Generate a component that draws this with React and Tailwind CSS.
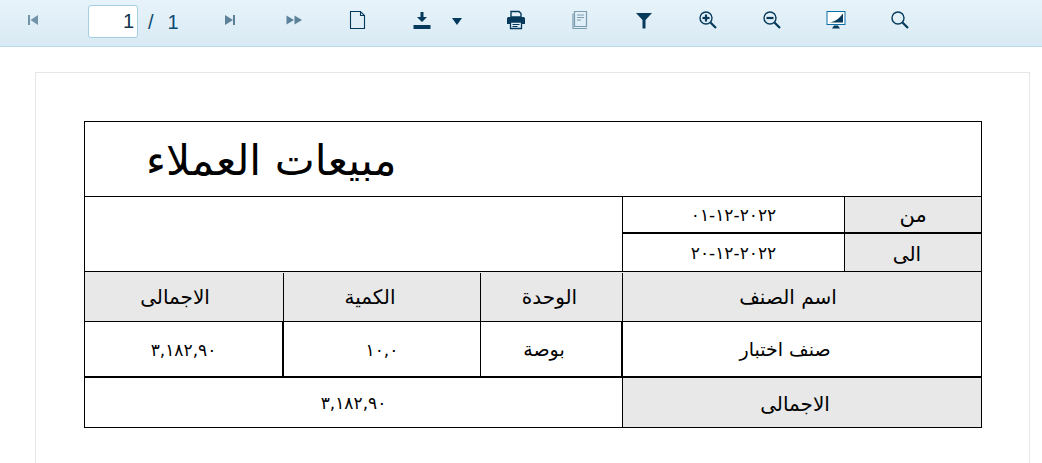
import React from "react";

const Ico = ({ children, className = "" }) => (
  <svg width="20" height="20" viewBox="0 0 20 20" className={className}>
    {children}
  </svg>
);

const NAVY = "#053a5c";

const FirstIcon = () => (
  <Ico className="opacity-50">
    <path d="M5 5h2v10H5zM15 5v10L7.500 10z" fill={NAVY} />
  </Ico>
);
const NextEndIcon = () => (
  <Ico className="opacity-60">
    <path d="M5 5l8 5-8 5zM13 5h2v10h-2z" fill={NAVY} />
  </Ico>
);
const LastIcon = () => (
  <Ico className="opacity-60">
    <path d="M2.500 5.500L10 10l-7.500 4.500zM10.500 5.500L18 10l-7.500 4.500z" fill={NAVY} />
  </Ico>
);
const DocIcon = () => (
  <Ico>
    <path d="M2.500 1.500h10l4 4v13h-14z M12.500 1.500v4h4" fill="none" stroke={NAVY} strokeWidth="1.100" />
  </Ico>
);
const DownloadIcon = () => (
  <Ico>
    <path d="M8.500 2h3v5h3.500L10 12 5 7h3.500z" fill={NAVY} />
    <rect x="1.500" y="15" width="17" height="4" fill={NAVY} />
  </Ico>
);
const PrintIcon = () => (
  <Ico>
    <path d="M5 1.500h8l2 2V7H5z" fill="none" stroke={NAVY} strokeWidth="1.400" />
    <path d="M1 8.500a1.500 1.500 0 0 1 1.500-1.500h15A1.500 1.500 0 0 1 19 8.500V14h-3v-2H4v2H1z" fill={NAVY} />
    <path d="M4.500 12h11v6.500h-11z" fill="none" stroke={NAVY} strokeWidth="1.300" />
    <path d="M6.500 14.500h7M6.500 16.500h5" stroke={NAVY} strokeWidth="1" />
  </Ico>
);
const BookIcon = () => (
  <Ico className="opacity-45">
    <path d="M3 3.500v15h14" fill="none" stroke={NAVY} strokeWidth="1.200" />
    <path d="M4.500 1.500h12v15h-12z" fill="none" stroke={NAVY} strokeWidth="1.200" />
    <path d="M7 5h7M7 7.500h7M7 10h4" stroke={NAVY} strokeWidth="1" />
  </Ico>
);
const FilterIcon = () => (
  <Ico>
    <path d="M2 3h16l-6.500 7v8.500h-3V10z" fill={NAVY} />
  </Ico>
);
const ZoomIcon = ({ sign }) => (
  <Ico>
    <circle cx="8" cy="8" r="6" fill="none" stroke={NAVY} strokeWidth="1.400" />
    <path d="M12.500 12.500l5.500 5.500" stroke={NAVY} strokeWidth="2.200" />
    {sign !== "none" && <path d="M4.500 8h7" stroke={NAVY} strokeWidth="2.200" />}
    {sign === "plus" && <path d="M8 4.500v7" stroke={NAVY} strokeWidth="2.200" />}
  </Ico>
);
const MonitorIcon = () => (
  <Ico>
    <rect x="1" y="1.500" width="18" height="13" fill="#fff" stroke="#0a6ea8" strokeWidth="1" />
    <path d="M3 12.500c6-.5 10-4 14-9v9z" fill={NAVY} />
    <path d="M8 15.500h4l2 3H6z" fill={NAVY} />
  </Ico>
);

const ToolBtn = ({ children }) => (
  <div className="flex h-10 w-16 items-center justify-center">{children}</div>
);

const Cell = ({ className = "", children }) => (
  <div
    dir="rtl"
    className={`flex items-center justify-center text-black ${className}`}
  >
    {children}
  </div>
);

export default function App() {
  return (
    <div className="h-[463px] w-[1042px] overflow-hidden bg-white font-['DejaVu_Sans',sans-serif]">
      {/* toolbar */}
      <div className="flex h-[47px] items-start border-b border-[#b9dcec] bg-gradient-to-b from-[#e7f3fa] to-[#d9eaf4] pl-px">
        <ToolBtn><FirstIcon /></ToolBtn>
        <div className="flex w-[133px] items-start pl-[23px] pt-[5px] font-['Liberation_Sans',sans-serif] text-xl text-[#0b4a72]">
          <div className="flex h-[33px] w-[50px] items-center justify-end rounded-[3px] border border-[#a5cde3] bg-white pb-px pr-[3px] text-[#12344d]">1</div>
          <span className="ml-[10px] mt-[3px]">/</span>
          <span className="ml-[14px] mt-[3px]">1</span>
        </div>
        <ToolBtn><NextEndIcon /></ToolBtn>
        <ToolBtn><LastIcon /></ToolBtn>
        <ToolBtn><DocIcon /></ToolBtn>
        <div className="flex h-10 w-[94px] items-center pl-[22px]">
          <DownloadIcon />
          <div className="ml-[20px] mt-[3px] h-0 w-0 border-x-[5px] border-t-[7px] border-x-transparent border-t-[#053a5c]" />
        </div>
        <ToolBtn><PrintIcon /></ToolBtn>
        <ToolBtn><BookIcon /></ToolBtn>
        <ToolBtn><FilterIcon /></ToolBtn>
        <ToolBtn><ZoomIcon sign="plus" /></ToolBtn>
        <ToolBtn><ZoomIcon sign="minus" /></ToolBtn>
        <ToolBtn><MonitorIcon /></ToolBtn>
        <ToolBtn><ZoomIcon sign="none" /></ToolBtn>
      </div>

      {/* report page */}
      <div className="ml-[35px] mt-[25px] h-[420px] w-[995px] border border-[#e6e6e6] pl-[48px] pt-12">
        <div className="w-[898px] border border-black">
          <div className="flex h-[75px] items-center border-b border-black pl-[61px] pt-1">
            <span dir="rtl" className="text-[42.5px] leading-none text-black">مبيعات العملاء</span>
          </div>

          <div className="flex h-[75px] border-b border-black">
            <div className="flex-1" />
            <div className="flex w-[359px] flex-col border-l border-black">
              <div className="flex h-[37px] border-b-2 border-black">
                <Cell className="w-[222px] border-r border-black pt-[3px] text-[17px]">٢٠٢٢-١٢-٠١</Cell>
                <Cell className="flex-1 bg-[#e8e8e8] pt-[3px] text-[21px]">من</Cell>
              </div>
              <div className="flex flex-1">
                <Cell className="w-[222px] border-r border-black pt-[3px] text-[17px]">٢٠٢٢-١٢-٢٠</Cell>
                <Cell className="flex-1 bg-[#e8e8e8] pr-3 pt-[3px] text-[20px]">الى</Cell>
              </div>
            </div>
          </div>

          <div className="flex h-[50px] border-b border-black bg-[#e8e8e8] pt-px text-[20px]">
            <Cell className="w-[199px] border-r border-black pr-[18px]">الاجمالى</Cell>
            <Cell className="w-[197px] border-r border-black pr-6">الكمية</Cell>
            <Cell className="w-[142px] border-r border-black pr-1">الوحدة</Cell>
            <Cell className="flex-1 pr-7">اسم الصنف</Cell>
          </div>

          <div className="flex h-[56px] border-b-2 border-black text-[19px]">
            <Cell className="w-[199px] border-r-2 border-black pt-[3px] text-[17px]">٣,١٨٢,٩٠</Cell>
            <Cell className="w-[197px] border-r border-black pt-[3px] text-[17px]">١٠,٠</Cell>
            <Cell className="w-[142px] border-r-2 border-black pr-3.5 pt-px">بوصة</Cell>
            <Cell className="flex-1 pr-[34px] pt-px">صنف اختبار</Cell>
          </div>

          <div className="flex h-[49px]">
            <Cell className="w-[538px] border-r border-black pt-[3px] text-[17px]">٣,١٨٢,٩٠</Cell>
            <Cell className="flex-1 bg-[#e8e8e8] pr-3.5 pt-[3px] text-[20px]">الاجمالى</Cell>
          </div>
        </div>
      </div>
    </div>
  );
}
